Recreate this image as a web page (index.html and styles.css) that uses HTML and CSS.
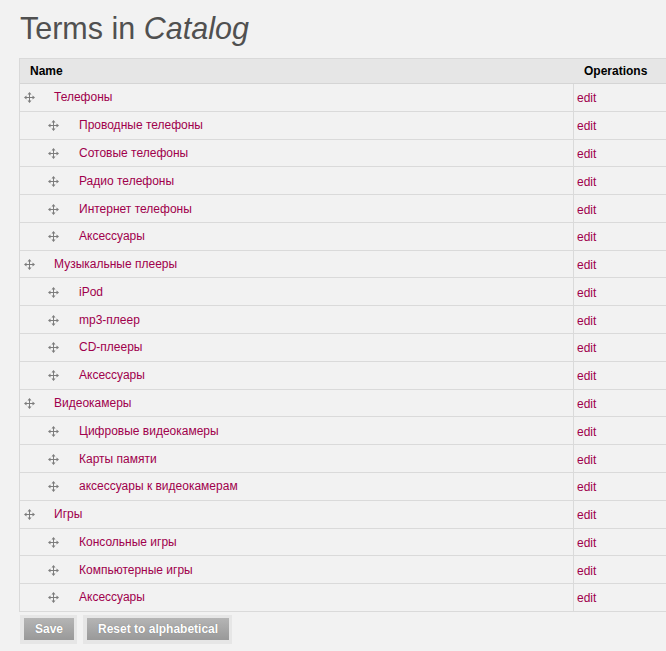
FILE: index.html
```html
<!DOCTYPE html>
<html>
<head>
<meta charset="utf-8">
<link rel="stylesheet" href="styles.css">
</head>
<body>
<svg width="0" height="0" class="defs">
  <symbol id="drag" viewBox="0 0 11 11">
    <path d="M5.5 2v7M2 5.5h7" stroke="#7d7d7d" stroke-width="1" fill="none"/>
    <path d="M5.5 0L3.5 2.5H7.5Z M5.5 11L3.5 8.5H7.5Z M0 5.5L2.5 3.5V7.5Z M11 5.5L8.5 3.5V7.5Z" fill="#7d7d7d"/>
  </symbol>
</svg>
<h1 class="title">Terms in <em>Catalog</em></h1>
<div class="terms">
  <div class="head">
    <div class="hname">Name</div>
    <div class="hops">Operations</div>
  </div>
  <div class="row"><div class="name"><svg class="icon"><use href="#drag"/></svg><a href="#">Телефоны</a></div><div class="ops"><a href="#">edit</a></div></div>
  <div class="row child"><div class="name"><svg class="icon"><use href="#drag"/></svg><a href="#">Проводные телефоны</a></div><div class="ops"><a href="#">edit</a></div></div>
  <div class="row child"><div class="name"><svg class="icon"><use href="#drag"/></svg><a href="#">Сотовые телефоны</a></div><div class="ops"><a href="#">edit</a></div></div>
  <div class="row child"><div class="name"><svg class="icon"><use href="#drag"/></svg><a href="#">Радио телефоны</a></div><div class="ops"><a href="#">edit</a></div></div>
  <div class="row child"><div class="name"><svg class="icon"><use href="#drag"/></svg><a href="#">Интернет телефоны</a></div><div class="ops"><a href="#">edit</a></div></div>
  <div class="row child"><div class="name"><svg class="icon"><use href="#drag"/></svg><a href="#">Аксессуары</a></div><div class="ops"><a href="#">edit</a></div></div>
  <div class="row"><div class="name"><svg class="icon"><use href="#drag"/></svg><a href="#">Музыкальные плееры</a></div><div class="ops"><a href="#">edit</a></div></div>
  <div class="row child"><div class="name"><svg class="icon"><use href="#drag"/></svg><a href="#">iPod</a></div><div class="ops"><a href="#">edit</a></div></div>
  <div class="row child"><div class="name"><svg class="icon"><use href="#drag"/></svg><a href="#">mp3-плеер</a></div><div class="ops"><a href="#">edit</a></div></div>
  <div class="row child"><div class="name"><svg class="icon"><use href="#drag"/></svg><a href="#">CD-плееры</a></div><div class="ops"><a href="#">edit</a></div></div>
  <div class="row child"><div class="name"><svg class="icon"><use href="#drag"/></svg><a href="#">Аксессуары</a></div><div class="ops"><a href="#">edit</a></div></div>
  <div class="row"><div class="name"><svg class="icon"><use href="#drag"/></svg><a href="#">Видеокамеры</a></div><div class="ops"><a href="#">edit</a></div></div>
  <div class="row child"><div class="name"><svg class="icon"><use href="#drag"/></svg><a href="#">Цифровые видеокамеры</a></div><div class="ops"><a href="#">edit</a></div></div>
  <div class="row child"><div class="name"><svg class="icon"><use href="#drag"/></svg><a href="#">Карты памяти</a></div><div class="ops"><a href="#">edit</a></div></div>
  <div class="row child"><div class="name"><svg class="icon"><use href="#drag"/></svg><a href="#">аксессуары к видеокамерам</a></div><div class="ops"><a href="#">edit</a></div></div>
  <div class="row"><div class="name"><svg class="icon"><use href="#drag"/></svg><a href="#">Игры</a></div><div class="ops"><a href="#">edit</a></div></div>
  <div class="row child"><div class="name"><svg class="icon"><use href="#drag"/></svg><a href="#">Консольные игры</a></div><div class="ops"><a href="#">edit</a></div></div>
  <div class="row child"><div class="name"><svg class="icon"><use href="#drag"/></svg><a href="#">Компьютерные игры</a></div><div class="ops"><a href="#">edit</a></div></div>
  <div class="row child"><div class="name"><svg class="icon"><use href="#drag"/></svg><a href="#">Аксессуары</a></div><div class="ops"><a href="#">edit</a></div></div>
</div>
<div class="actions">
  <div class="btn-wrap"><button class="btn">Save</button></div>
  <div class="btn-wrap"><button class="btn">Reset to alphabetical</button></div>
</div>
</body>
</html>
```

FILE: styles.css
```css
html, body {
  margin: 0;
  padding: 0;
  overflow: hidden;
}
body {
  background: #f2f2f2;
  font-family: "Liberation Sans", Arial, sans-serif;
  font-size: 12px;
  color: #000;
  width: 666px;
  height: 651px;
}
.defs {
  position: absolute;
  width: 0;
  height: 0;
}
.title {
  margin: 0;
  padding: 11px 0 0 20px;
  font-size: 30.5px;
  line-height: 34px;
  font-weight: normal;
  color: #505050;
}
.title em {
  font-style: italic;
}
.terms {
  margin: 13px 0 0 19px;
  width: 647px;
  box-sizing: border-box;
  border-top: 1px solid #d9d9d9;
  border-left: 1px solid #d9d9d9;
}
.head {
  display: flex;
  height: 24px;
  align-items: center;
  background: #e6e6e6;
  border-bottom: 1px solid #d5d5d5;
  font-weight: bold;
}
.hname {
  width: 553px;
  flex: none;
  padding-left: 10px;
  box-sizing: border-box;
}
.hops {
  padding-left: 11px;
  white-space: nowrap;
}
.row {
  display: flex;
  height: 26.79px;
  border-bottom: 1px solid #dadada;
  background: #f2f2f2;
}
.name {
  width: 553px;
  flex: none;
  display: flex;
  align-items: center;
  padding-left: 4px;
  box-sizing: border-box;
}
.row.child .name {
  padding-left: 28px;
}
.icon {
  width: 11px;
  height: 11px;
  flex: none;
  margin-top: 1px;
}
.name a {
  margin-left: 19px;
}
.row.child .name a {
  margin-left: 20px;
}
.ops {
  flex: 1;
  border-left: 1px solid #dadada;
  display: flex;
  align-items: center;
  padding-left: 3px;
  padding-top: 2px;
}
a {
  color: #a0004c;
  text-decoration: none;
}
.actions {
  display: flex;
  gap: 6px;
  margin: 3px 0 0 20px;
}
.btn-wrap {
  background: #e6e6e6;
  padding: 3px 3px 4px 4px;
  display: flex;
}
.btn {
  height: 22px;
  border: none;
  margin: 0;
  padding: 0 11px;
  background: linear-gradient(#b5b5b5, #999999);
  color: #fff;
  font-family: "Liberation Sans", Arial, sans-serif;
  font-weight: bold;
  font-size: 12px;
  text-shadow: 0 0 1px #777;
  cursor: pointer;
}
```
